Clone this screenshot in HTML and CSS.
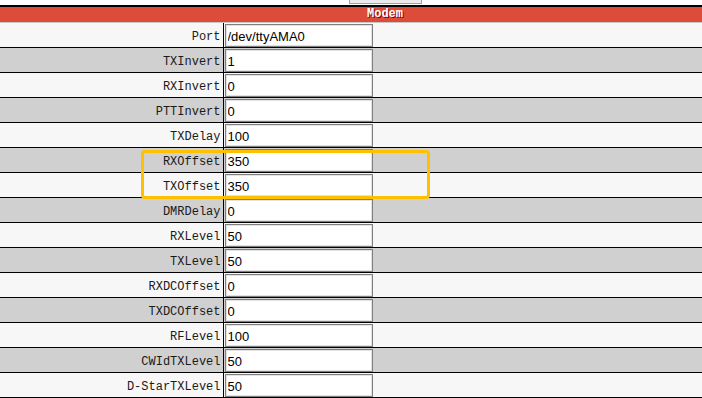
FILE: index.html
```
<!DOCTYPE html>
<html lang="en">
<head>
  <meta charset="UTF-8" />
  <meta name="viewport" content="width=device-width, initial-scale=1" />
  <title>Pi-Star - Modem</title>
  <link rel="stylesheet" href="styles.css">
</head>
<body>
  <div class="page">
    <div class="prev-section">
      <button class="apply" type="button" aria-label="Apply Changes"></button>
    </div>

    <table class="config">
      <tr><th colspan="2">Modem</th></tr>
      <tr><td class="label">Port</td><td class="value"><input type="text" value="/dev/ttyAMA0" /></td></tr>
      <tr><td class="label">TXInvert</td><td class="value"><input type="text" value="1" /></td></tr>
      <tr><td class="label">RXInvert</td><td class="value"><input type="text" value="0" /></td></tr>
      <tr><td class="label">PTTInvert</td><td class="value"><input type="text" value="0" /></td></tr>
      <tr><td class="label">TXDelay</td><td class="value"><input type="text" value="100" /></td></tr>
      <tr><td class="label">RXOffset</td><td class="value"><input type="text" value="350" /></td></tr>
      <tr><td class="label">TXOffset</td><td class="value"><input type="text" value="350" /></td></tr>
      <tr><td class="label">DMRDelay</td><td class="value"><input type="text" value="0" /></td></tr>
      <tr><td class="label">RXLevel</td><td class="value"><input type="text" value="50" /></td></tr>
      <tr><td class="label">TXLevel</td><td class="value"><input type="text" value="50" /></td></tr>
      <tr><td class="label">RXDCOffset</td><td class="value"><input type="text" value="0" /></td></tr>
      <tr><td class="label">TXDCOffset</td><td class="value"><input type="text" value="0" /></td></tr>
      <tr><td class="label">RFLevel</td><td class="value"><input type="text" value="100" /></td></tr>
      <tr><td class="label">CWIdTXLevel</td><td class="value"><input type="text" value="50" /></td></tr>
      <tr><td class="label">D-StarTXLevel</td><td class="value"><input type="text" value="50" /></td></tr>
    </table>

    <!-- markering rond de offset-velden -->
    <div class="highlight"></div>
  </div>
</body>
</html>
```

FILE: styles.css
```
* {
  box-sizing: border-box;
}

body {
  margin: 0;
  background: #ffffff;
  overflow: hidden;
}

.page {
  position: relative;
  width: 770px;
}

.prev-section {
  height: 5px;
  overflow: hidden;
  display: flex;
  justify-content: center;
  align-items: flex-end;
  padding-bottom: 1px;
}

.apply {
  flex: none;
  width: 73px;
  height: 20px;
  border: 1px solid #a0a0a0;
  background: #ececec;
}

.config {
  width: 770px;
  border-collapse: collapse;
  border-top: 2px solid #000000;
  font-family: "Liberation Mono", monospace;
  font-size: 12px;
}

.config th {
  height: 16px;
  padding: 0;
  background: #dd4b39;
  border-bottom: 1px solid #c8c8c8;
  color: #ffffff;
  font-weight: bold;
  font-size: 12px;
  line-height: 15px;
  text-align: center;
  text-shadow: 1px 1px #8b0000;
}

.config tr:nth-child(even) {
  background: #f7f7f7;
}

.config tr:nth-child(odd) {
  background: #d0d0d0;
}

.config td {
  height: 24px;
  padding: 0;
  border-bottom: 1px solid #000000;
  color: #000000;
}

.config td.label {
  width: 223px;
  padding: 3px 2px 0 0;
  text-align: right;
  border-right: 1px solid #000000;
  color: #1a1a1a;
}

.config td.value {
  padding: 1px 0 0 1px;
  text-align: left;
}

.config input[type="text"] {
  display: block;
  width: 148px;
  height: 23px;
  margin: 0;
  padding: 1px 2px 0;
  border: 1px solid #7f7f7f;
  box-shadow: inset 0 0 0 1px #e2e2e2;
  background: #ffffff;
  font-family: "Liberation Sans", sans-serif;
  font-size: 13px;
  color: #000000;
}

.highlight {
  position: absolute;
  left: 141px;
  top: 150px;
  width: 289px;
  height: 49px;
  border: 3px solid #ffc000;
  border-radius: 4px;
}
```
